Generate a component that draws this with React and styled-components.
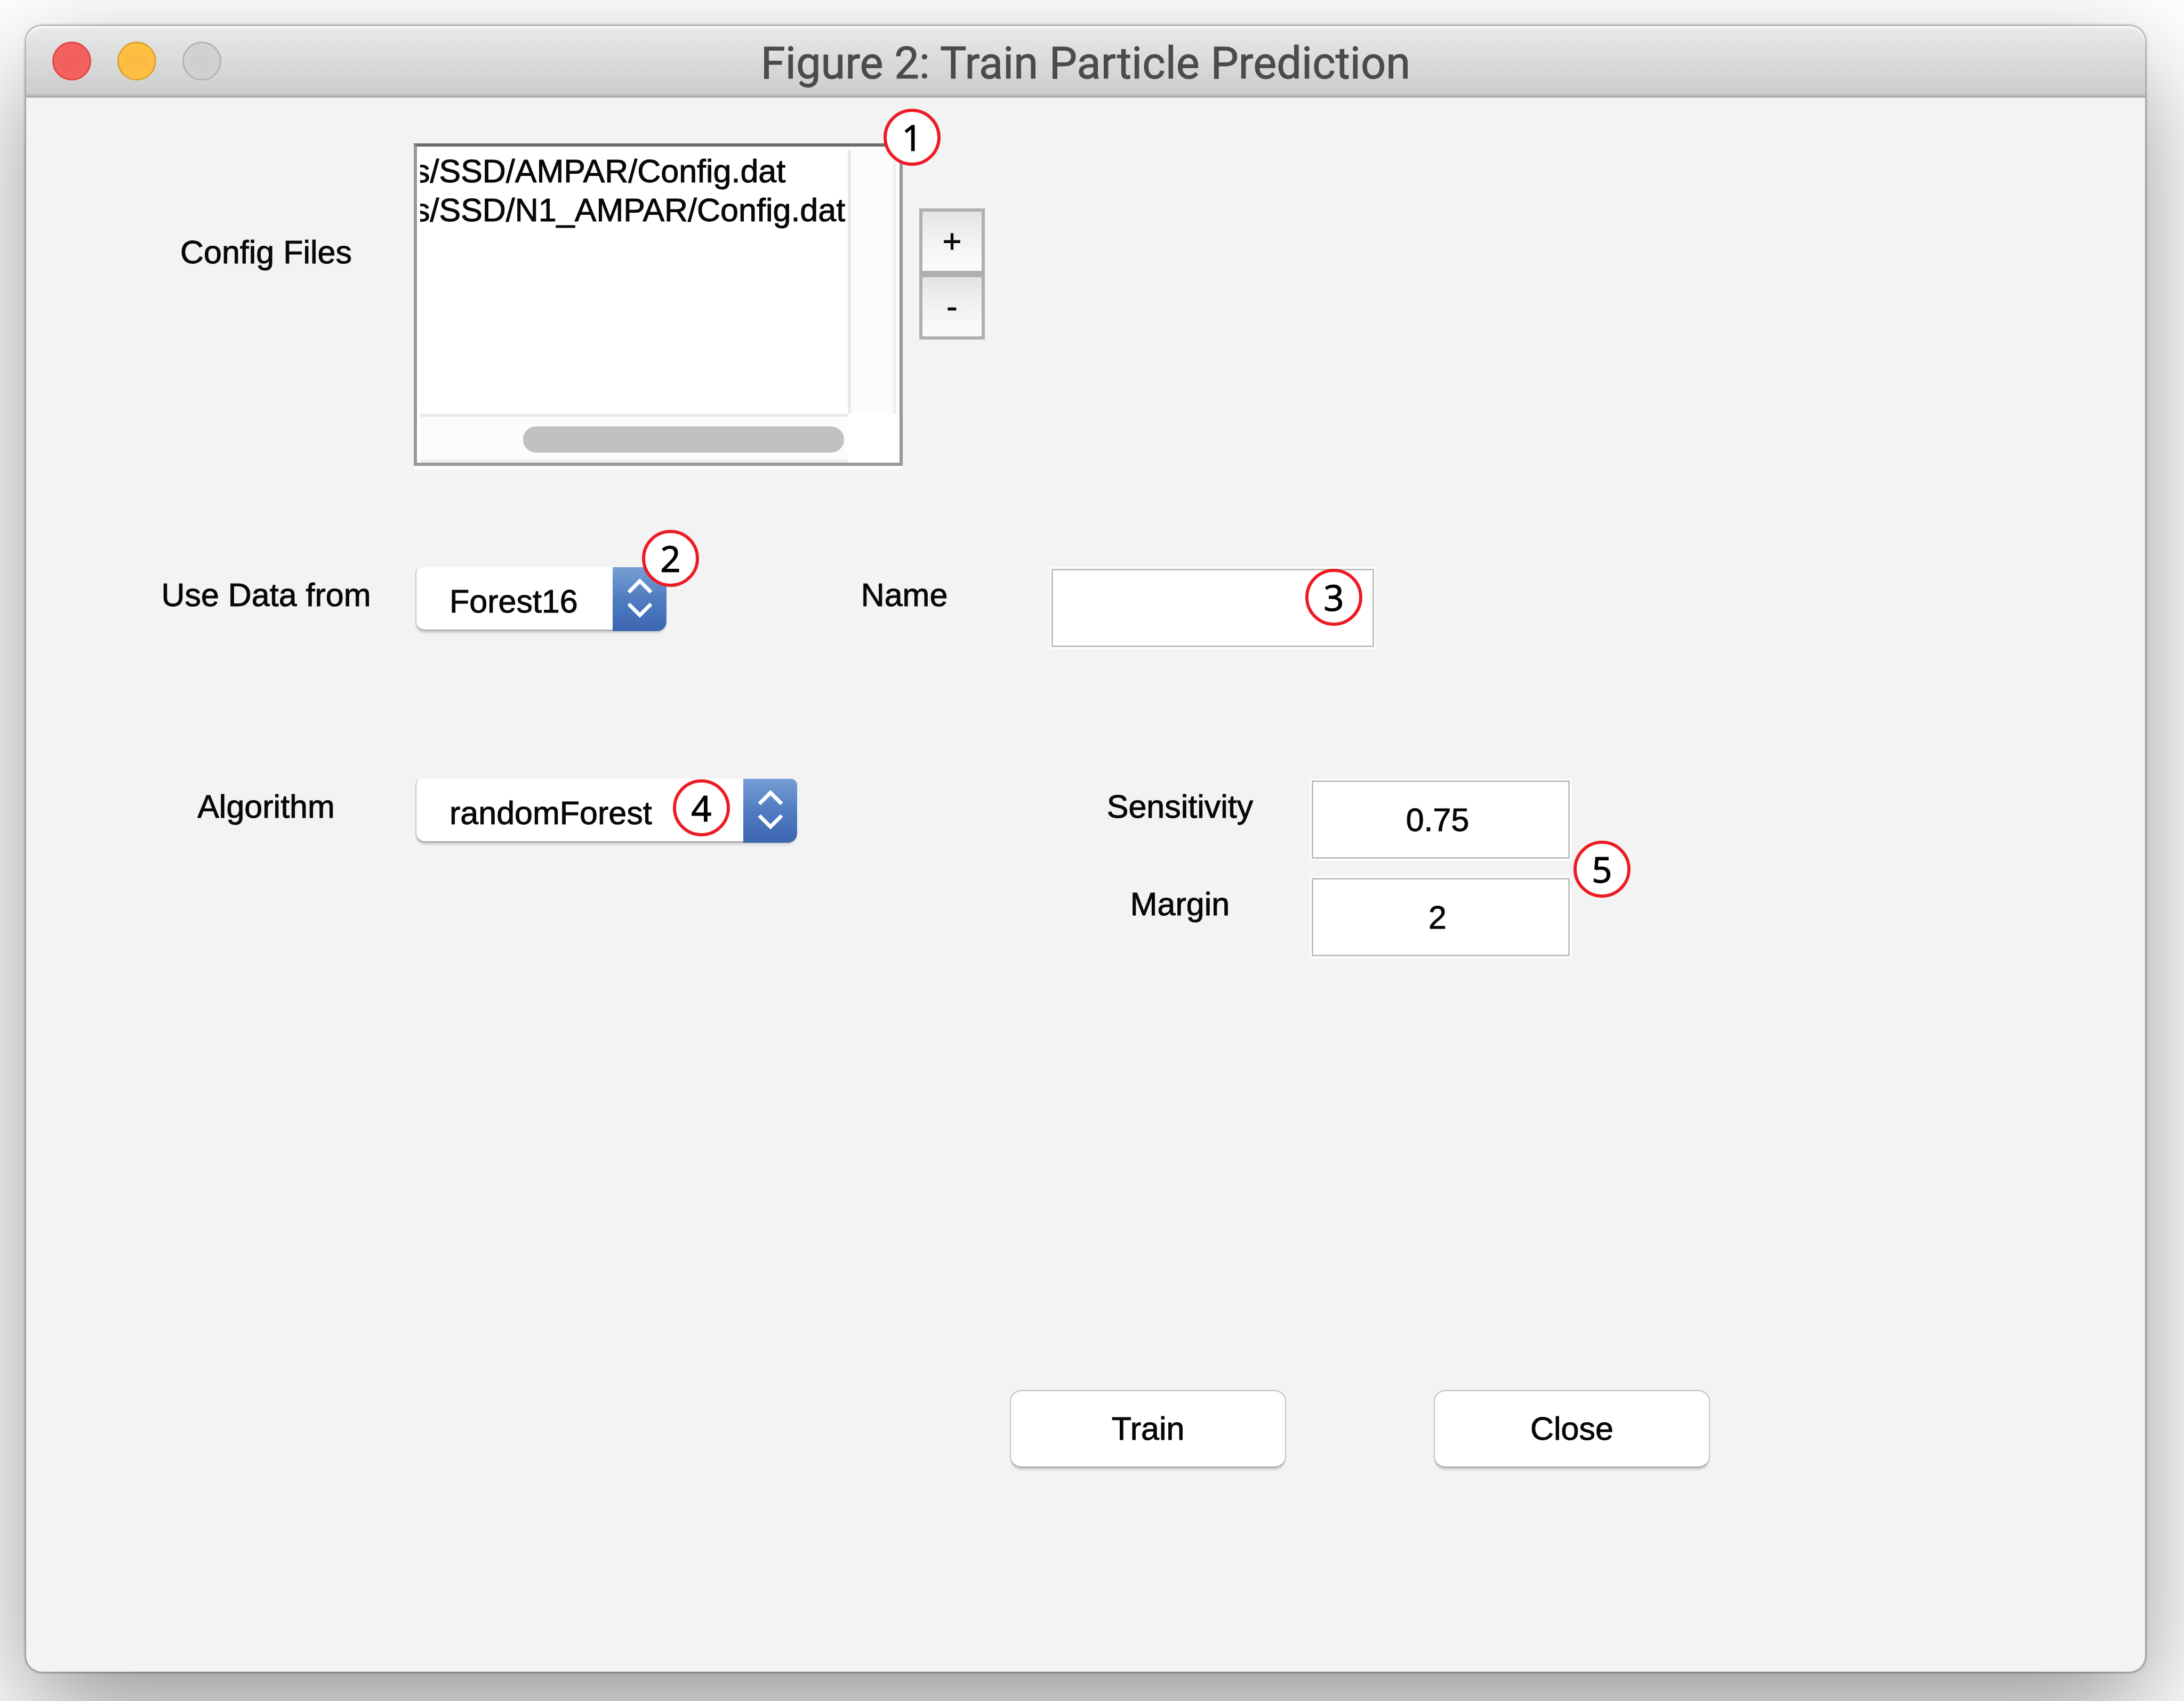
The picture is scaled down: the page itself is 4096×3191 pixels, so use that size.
import React, { useState } from 'react';
import styled, { createGlobalStyle, css } from 'styled-components';

const GlobalStyle = createGlobalStyle`
  *, *::before, *::after { box-sizing: border-box; }
  body {
    margin: 0;
    background: #ffffff;
    color: #050807;
    font-family: "Liberation Sans", Arial, Helvetica, sans-serif;
    font-size: 61px;
    line-height: 73px;
    -webkit-text-stroke: 1px currentColor;
  }
  button, input, select {
    font: inherit;
    color: inherit;
    margin: 0;
    -webkit-text-stroke: 1px currentColor;
  }
`;

const Desktop = styled.div`
  display: flex;
  min-height: 100vh;
  padding: 49px 73px 55px 49px;
  overflow: hidden;
`;

const Window = styled.section`
  flex: 1;
  display: flex;
  flex-direction: column;
  border-radius: 30px;
  background: #f3f3f3;
  box-shadow:
    0 0 0 3px rgba(0, 0, 0, 0.19),
    0 0 0 6px rgba(0, 0, 0, 0.04),
    0 80px 210px rgba(0, 0, 0, 0.41);
`;

const TitleBar = styled.header`
  display: grid;
  grid-template-columns: 1fr auto 1fr;
  align-items: center;
  height: 134px;
  padding: 0 49px;
  border-radius: 30px 30px 0 0;
  border-bottom: 3px solid #a6a6a6;
  background: linear-gradient(#e8e9e9, #cccccc);
  box-shadow: inset 0 3px 0 #fafbfb, inset 0 6px 0 #ededed, inset 0 -3px 0 #bbbbbb;
`;

const Lights = styled.div`
  display: flex;
  gap: 49px;
`;

const Light = styled.button`
  width: 73px;
  height: 73px;
  padding: 0;
  border: 3px solid ${(p) => p.$ring};
  border-radius: 50%;
  background: radial-gradient(circle, ${(p) => p.$core}, ${(p) => p.$fill} 70%);
`;

const Title = styled.h1`
  margin: 0;
  padding-top: 8px;
  color: #4a4c4b;
  font-family: Roboto, "Liberation Sans", sans-serif;
  font-size: 83px;
  font-weight: 400;
  line-height: 97px;
  white-space: nowrap;
`;

const Form = styled.form`
  flex: 1;
  display: flex;
  flex-direction: column;
  padding: 86px 0 382px 173px;
`;

const Row = styled.div`
  display: grid;
  grid-template-columns: 554px 647px 546px 1fr;
  align-items: start;
  margin-bottom: ${(p) => p.$after || 0}px;
`;

const Label = styled.label`
  padding-top: ${(p) => p.$drop || 16}px;
  text-align: center;
  white-space: nowrap;
`;

const Cell = styled.div`
  grid-column: span ${(p) => p.$span || 1};
  display: flex;
  align-items: flex-start;
  gap: 31px;
  padding-left: ${(p) => p.$inset || 0}px;
`;

const Anchor = styled.div`
  position: relative;
`;

const Badge = styled.span`
  position: absolute;
  top: ${(p) => p.$top}px;
  right: ${(p) => p.$right}px;
  display: flex;
  align-items: center;
  justify-content: center;
  width: 107px;
  height: 107px;
  border: 6px solid #ed1c24;
  border-radius: 50%;
  background: #ffffff;
  color: #000000;
  font-family: "Noto Sans", "Open Sans", sans-serif;
  font-size: 67px;
`;

const ListFrame = styled.div`
  display: grid;
  grid-template-columns: 802px 91px;
  grid-template-rows: 495px 92px;
  width: 917px;
  height: 605px;
  padding: 6px 0 0 6px;
  border: 6px solid #999999;
  border-top-color: #6b6b6b;
  background: #ffffff;
  box-shadow: 0 6px 0 #ffffff;
`;

const FileList = styled.select`
  appearance: none;
  width: 802px;
  height: 495px;
  padding: 5px 0 0;
  border: 0;
  outline: 0;
  overflow: hidden;
  background: #ffffff;

  option {
    min-height: 73px;
    padding: 0;
    line-height: 73px;
    text-indent: -12px;
    white-space: nowrap;
  }
`;

const track = css`
  background: #fcfcfc;
`;

const VerticalTrack = styled.div`
  ${track}
  border-left: 6px solid #e8e9ea;
  border-right: 6px solid #efefef;
`;

const HorizontalTrack = styled.div`
  ${track}
  display: flex;
  align-items: center;
  justify-content: flex-end;
  padding: 4px 7px 0 0;
  border-top: 6px solid #e8e9ea;
  border-bottom: 6px solid #eeefef;
`;

const Thumb = styled.div`
  width: 602px;
  height: 49px;
  border-radius: 24px;
  background: #c1c1c1;
`;

const StepButtons = styled.div`
  display: flex;
  flex-direction: column;
  padding-top: 122px;
`;

const SquareButton = styled.button`
  width: 123px;
  height: 123px;
  padding: 0;
  border: 6px solid #aeb0af;
  background: linear-gradient(#e2e4e3, #f1f1f1 45%, #f6f7f9 75%, #fafcfa);
`;

const PopupFrame = styled.div`
  display: grid;
  width: ${(p) => p.$width}px;
  height: 120px;
  border-radius: 12px 12px 18px 18px;
  overflow: hidden;
  box-shadow: 0 3px 0 #d3d4d4, 0 6px 0 #e8e9e9;

  > * { grid-area: 1 / 1; }
`;

const PopupSelect = styled.select`
  appearance: none;
  width: 100%;
  height: 120px;
  padding: 12px 100px 0 62px;
  border: 0 solid #c6c6c6;
  border-left-width: 2px;
  border-bottom: 3px solid #b1b1b1;
  border-radius: 12px 12px 18px 18px;
  background: #ffffff;
`;

const Stepper = styled.span`
  display: flex;
  flex-direction: column;
  align-items: center;
  justify-self: end;
  gap: 18px;
  width: 101px;
  height: 120px;
  padding-top: 20px;
  background: linear-gradient(#779fd5, #4f7cc1 50%, #3c66b1);
  pointer-events: none;
`;

const Arrow = styled.svg`
  display: block;
  width: 48px;
  height: 29px;
  fill: none;
  stroke: #ffffff;
  stroke-width: 7;
`;

const TextField = styled.input`
  display: block;
  width: ${(p) => p.$width}px;
  height: 147px;
  margin: 3px;
  padding: 0 12px 0 0;
  border: 3px solid #c0c0c0;
  border-radius: 0;
  outline: 0;
  background: #ffffff;
  box-shadow: 0 0 0 3px #ffffff;
  text-align: center;
`;

const Params = styled.div`
  position: relative;
  display: grid;
  grid-template-columns: 488px 490px;
  row-gap: 30px;
`;

const Actions = styled.footer`
  display: flex;
  justify-content: flex-end;
  gap: 277px;
  margin-top: auto;
  padding-right: 816px;
`;

const PushButton = styled.button`
  width: 518px;
  height: 147px;
  padding: 0;
  border: 2px solid #c6c6c6;
  border-top: 3px solid #cacaca;
  border-bottom: 3px solid #b1b1b1;
  border-radius: 22px;
  background: #ffffff;
  box-shadow: 0 3px 0 #d5d6d5, 0 6px 0 #e9eae9;
`;

const configFiles = ['s/SSD/AMPAR/Config.dat', 's/SSD/N1_AMPAR/Config.dat'];

function Popup({ id, width, options }) {
  return (
    <PopupFrame $width={width}>
      <PopupSelect id={id} defaultValue={options[0]}>
        {options.map((o) => (
          <option key={o}>{o}</option>
        ))}
      </PopupSelect>
      <Stepper aria-hidden="true">
        <Arrow viewBox="0 0 48 29"><path d="M3 27 L24 6 L45 27" /></Arrow>
        <Arrow viewBox="0 0 48 29"><path d="M3 2 L24 23 L45 2" /></Arrow>
      </Stepper>
    </PopupFrame>
  );
}

export default function App() {
  const [name, setName] = useState('');
  const [sensitivity, setSensitivity] = useState('0.75');
  const [margin, setMargin] = useState('2');

  return (
    <>
      <GlobalStyle />
      <Desktop>
        <Window aria-labelledby="window-title">
          <TitleBar>
            <Lights>
              <Light aria-label="Close window" $ring="#e34644" $core="#f05d5c" $fill="#f3625f" />
              <Light aria-label="Minimize" $ring="#dfa033" $core="#fbb83f" $fill="#fec043" />
              <Light aria-label="Zoom" disabled $ring="#b4b4b4" $core="#cdcdcd" $fill="#d2d2d2" />
            </Lights>
            <Title id="window-title">Figure 2: Train Particle Prediction</Title>
          </TitleBar>

          <Form onSubmit={(e) => e.preventDefault()}>
            <Row $after={190}>
              <Label htmlFor="config-files" $drop={168}>Config Files</Label>
              <Cell $span={3}>
                <Anchor>
                  <ListFrame>
                    <FileList id="config-files" multiple>
                      {configFiles.map((f) => (
                        <option key={f}>{f}</option>
                      ))}
                    </FileList>
                    <VerticalTrack />
                    <HorizontalTrack>
                      <Thumb />
                    </HorizontalTrack>
                  </ListFrame>
                  <Badge $top={-65} $right={-71}>1</Badge>
                </Anchor>
                <StepButtons>
                  <SquareButton type="button">+</SquareButton>
                  <SquareButton type="button">-</SquareButton>
                </StepButtons>
              </Cell>
            </Row>

            <Row $after={244}>
              <Label htmlFor="data-source">Use Data from</Label>
              <Cell $inset={3}>
                <Anchor>
                  <Popup id="data-source" width={471} options={['Forest16']} />
                  <Badge $top={-70} $right={-61}>2</Badge>
                </Anchor>
              </Cell>
              <Label htmlFor="name">Name</Label>
              <Cell>
                <Anchor>
                  <TextField id="name" $width={605} value={name} onChange={(e) => setName(e.target.value)} />
                  <Badge $top={3} $right={25}>3</Badge>
                </Anchor>
              </Cell>
            </Row>

            <Row>
              <Label htmlFor="algorithm">Algorithm</Label>
              <Cell $span={2} $inset={3}>
                <Anchor>
                  <Popup id="algorithm" width={716} options={['randomForest']} />
                  <Badge $top={1} $right={126}>4</Badge>
                </Anchor>
              </Cell>
              <Cell>
                <Params>
                  <Label htmlFor="sensitivity">Sensitivity</Label>
                  <TextField id="sensitivity" $width={484} value={sensitivity} onChange={(e) => setSensitivity(e.target.value)} />
                  <Label htmlFor="margin">Margin</Label>
                  <TextField id="margin" $width={484} value={margin} onChange={(e) => setMargin(e.target.value)} />
                  <Badge $top={116} $right={-111}>5</Badge>
                </Params>
              </Cell>
            </Row>

            <Actions>
              <PushButton type="submit">Train</PushButton>
              <PushButton type="button">Close</PushButton>
            </Actions>
          </Form>
        </Window>
      </Desktop>
    </>
  );
}
